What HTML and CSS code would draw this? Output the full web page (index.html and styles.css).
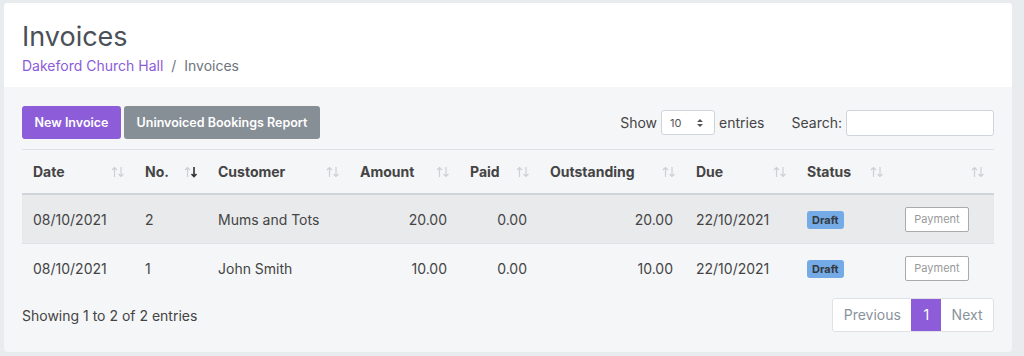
FILE: index.html
```html
<!DOCTYPE html>
<html lang="en">
<head>
    <meta charset="UTF-8">
    <title>Invoices</title>
    <link rel="stylesheet" href="styles.css">
</head>
<body>
    <div class="card">
        <div class="card-header">
            <h1>Invoices</h1>
            <div class="breadcrumb">
                <a href="#">Dakeford Church Hall</a>
                <span class="sep">/</span>
                <span class="current">Invoices</span>
            </div>
        </div>

        <div class="card-body">
            <div class="toolbar">
                <div class="actions">
                    <button class="btn btn-primary">New Invoice</button>
                    <button class="btn btn-secondary">Uninvoiced Bookings Report</button>
                </div>
                <div class="filters">
                    <label class="length">Show
                        <span class="select">10
                            <svg width="8" height="10" viewBox="0 0 8 10"><path d="M1 4 L4 1 L7 4 Z M1 6 L4 9 L7 6 Z" fill="#555"/></svg>
                        </span>
                        entries</label>
                    <label class="search">Search: <input type="text"></label>
                </div>
            </div>

            <table>
                <colgroup>
                    <col style="width:112px"><col style="width:73px"><col style="width:142px">
                    <col style="width:110px"><col style="width:80px"><col style="width:146px">
                    <col style="width:111px"><col style="width:97px"><col style="width:101px">
                </colgroup>
                <thead>
                    <tr>
                        <th>Date<span class="sort"></span></th>
                        <th>No.<span class="sort desc"></span></th>
                        <th>Customer<span class="sort"></span></th>
                        <th>Amount<span class="sort"></span></th>
                        <th>Paid<span class="sort"></span></th>
                        <th>Outstanding<span class="sort"></span></th>
                        <th>Due<span class="sort"></span></th>
                        <th>Status<span class="sort"></span></th>
                        <th><span class="sort"></span></th>
                    </tr>
                </thead>
                <tbody id="invoiceRows">
                    <!-- filled by script below -->
                </tbody>
            </table>

            <div class="table-footer">
                <div class="info">Showing 1 to 2 of 2 entries</div>
                <div class="pagination">
                    <a href="#" class="page">Previous</a>
                    <a href="#" class="page active">1</a>
                    <a href="#" class="page">Next</a>
                </div>
            </div>
        </div>
    </div>

    <script>
        const invoices = [
            { date: '08/10/2021', no: 2, customer: 'Mums and Tots', amount: '20.00', paid: '0.00', outstanding: '20.00', due: '22/10/2021' },
            { date: '08/10/2021', no: 1, customer: 'John Smith', amount: '10.00', paid: '0.00', outstanding: '10.00', due: '22/10/2021' }
        ];

        const arrows = '<svg width="14" height="12" viewBox="0 0 14 12"><path d="M3.5 11 V1.5 M1 4 L3.5 1.5 L6 4" /><path class="down" d="M10 1 V10.5 M7.5 8 L10 10.5 L12.5 8" /></svg>';
        document.querySelectorAll('.sort').forEach(el => el.innerHTML = arrows);

        const body = document.getElementById('invoiceRows');
        invoices.forEach(inv => {
            const row = document.createElement('tr');
            row.innerHTML = `
                <td>${inv.date}</td>
                <td>${inv.no}</td>
                <td>${inv.customer}</td>
                <td class="num">${inv.amount}</td>
                <td class="num">${inv.paid}</td>
                <td class="num">${inv.outstanding}</td>
                <td>${inv.due}</td>
                <td><span class="badge">Draft</span></td>
                <td><button class="btn-payment">Payment</button></td>
            `;
            body.appendChild(row);
        });
    </script>
</body>
</html>
```

FILE: styles.css
```css
body {
    margin: 0;
    padding: 3px 12px 4px 4px;
    background: #e9ecef;
    font-family: Inter, 'Liberation Sans', Arial, sans-serif;
    color: #444;
}
.card {
    background: #f5f6f8;
    border-radius: 4px;
    overflow: hidden;
    height: 349px;
}
.card-header {
    background: #fff;
    height: 84px;
    padding: 18px 18px 0;
    box-sizing: border-box;
}
h1 {
    margin: 0;
    font-size: 27px;
    font-weight: 400;
    color: #495057;
    line-height: 32px;
}
.breadcrumb {
    margin-top: 3px;
    font-size: 14px;
    line-height: 20px;
    color: #6c757d;
}
.breadcrumb a {
    color: #8c5cd9;
    text-decoration: none;
}
.breadcrumb .sep {
    margin: 0 4px;
}
.card-body {
    padding: 19px 18px 0;
}
.toolbar {
    display: flex;
    justify-content: space-between;
    align-items: center;
    height: 33px;
}
.actions {
    display: flex;
    gap: 3px;
}
.btn {
    border: none;
    border-radius: 3px;
    color: #fff;
    font-family: inherit;
    font-size: 12.5px;
    font-weight: 600;
    height: 33px;
    padding: 0 12px;
}
.btn-primary {
    background: #8c5cd9;
    width: 99px;
}
.btn-secondary {
    background: #868e96;
    width: 196px;
}
.filters {
    display: flex;
    align-items: center;
    font-size: 14px;
    color: #444;
}
.length {
    display: flex;
    align-items: center;
    gap: 4px;
}
.select {
    display: inline-flex;
    align-items: center;
    justify-content: space-between;
    width: 54px;
    height: 25px;
    box-sizing: border-box;
    padding: 0 10px 0 8px;
    background: #fff;
    border: 1px solid #ced4da;
    border-radius: 3px;
    font-size: 11px;
    color: #555;
}
.search {
    margin-left: 27px;
    display: flex;
    align-items: center;
    gap: 4px;
}
.search input {
    width: 148px;
    height: 26px;
    box-sizing: border-box;
    border: 1px solid #ced4da;
    border-radius: 3px;
    background: #fff;
}
table {
    width: 972px;
    margin-top: 10px;
    border-collapse: collapse;
    table-layout: fixed;
    font-size: 14px;
}
th {
    position: relative;
    text-align: left;
    font-weight: 700;
    color: #444;
    height: 43px;
    padding: 0 11px;
    border-top: 1px solid #dee2e6;
    border-bottom: 2px solid #ced4da;
}
.sort {
    position: absolute;
    right: 9px;
    top: 16px;
    line-height: 0;
}
.sort svg path {
    fill: none;
    stroke: #cdd0d3;
    stroke-width: 1.2;
}
.sort.desc svg .down {
    stroke: #333;
    stroke-width: 1.6;
}
td {
    height: 48px;
    padding: 0 11px;
    border-bottom: 1px solid #dee2e6;
    color: #444;
}
tbody tr:nth-child(odd) {
    background: #e9eaec;
}
tbody tr:last-child td {
    border-bottom: none;
}
td.num {
    text-align: right;
    padding-right: 12px;
}
.badge {
    display: inline-block;
    background: #74aae6;
    color: #343a40;
    font-size: 11px;
    font-weight: 700;
    padding: 2px 5px;
    border-radius: 3px;
}
.btn-payment {
    margin-left: 1px;
    width: 64px;
    height: 25px;
    background: #fff;
    border: 1px solid #aaa;
    border-radius: 2px;
    color: #999;
    font-family: inherit;
    font-size: 11px;
}
.table-footer {
    display: flex;
    justify-content: space-between;
    align-items: center;
    margin-top: 6px;
}
.info {
    font-size: 14px;
    color: #444;
}
.pagination {
    display: flex;
    border: 1px solid #dee2e6;
    border-radius: 3px;
    overflow: hidden;
    background: #fff;
}
.page {
    display: block;
    height: 32px;
    line-height: 32px;
    padding: 0 10.5px;
    font-size: 14px;
    color: #8a939b;
    text-decoration: none;
}
.page.active {
    background: #8c5cd9;
    color: #fff;
    padding: 0 12px;
}
```
